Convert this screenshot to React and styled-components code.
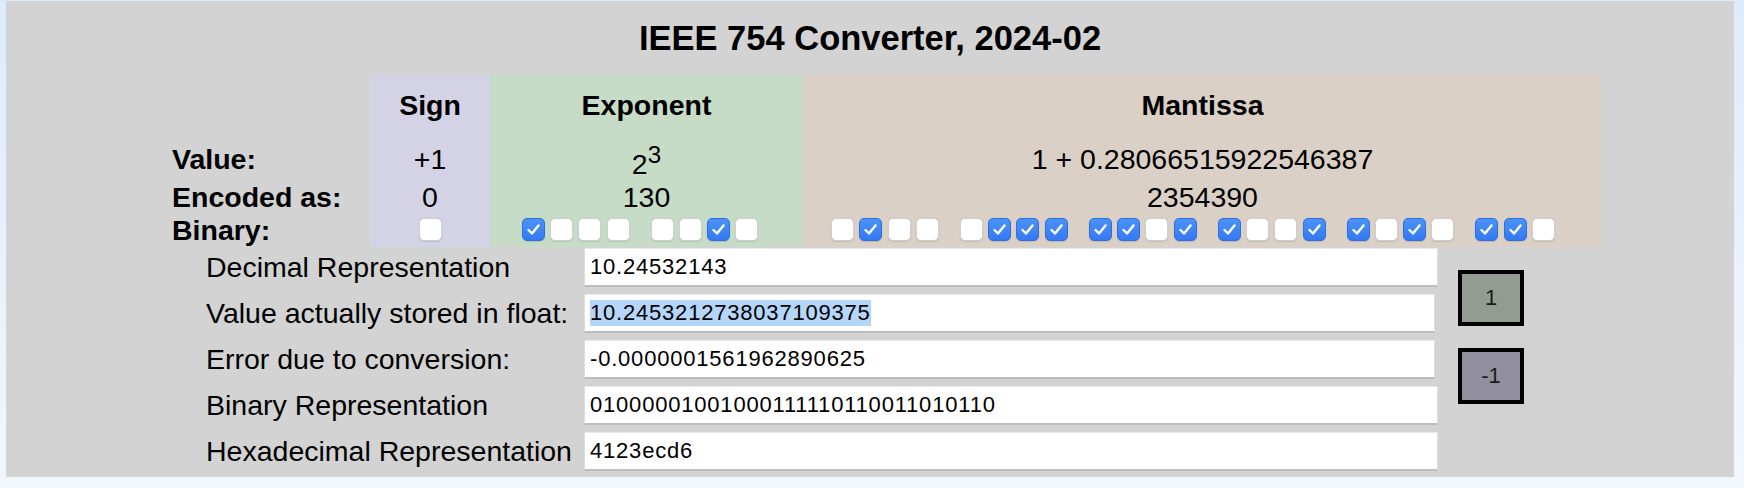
import React from 'react';
import styled, { createGlobalStyle } from 'styled-components';

const GlobalStyle = createGlobalStyle`
  html, body { margin: 0; padding: 0; }
  body {
    width: 1744px;
    height: 488px;
    overflow: hidden;
    background: linear-gradient(180deg, #deebfb 0%, #f1f7fd 100%);
    font-family: "Liberation Sans", Arial, Helvetica, sans-serif;
    color: #000;
  }
`;

const partColors = {
  sign: '#d3d3e5',
  exponent: '#c7dcc7',
  mantissa: '#dbd0c6',
};

const Panel = styled.div`
  margin: 1px 10px 0 6px;
  height: 476px;
  box-sizing: border-box;
  padding-top: 17px;
  background: #d3d3d3;
`;

const Title = styled.h1`
  margin: 0;
  font-size: 34.5px;
  line-height: 40px;
  font-weight: bold;
  text-align: center;
`;

const Table = styled.div`
  display: grid;
  grid-template-columns: 200px 120px 313px 799px;
  margin: 17px 0 0 164px;
  font-size: 28.5px;
  line-height: 33px;
`;

const Cell = styled.div`
  display: flex;
  align-items: center;
  justify-content: ${(p) => (p.$part ? 'center' : 'flex-start')};
  padding-left: ${(p) => (p.$part ? '0' : '2px')};
  background: ${(p) => (p.$part ? partColors[p.$part] : 'transparent')};
  font-weight: ${(p) => (p.$bold ? 'bold' : 'normal')};
  white-space: nowrap;
`;

const HeadCell = styled(Cell)`
  align-items: flex-start;
  padding-top: 14px;
  padding-bottom: 16px;
`;

const Sup = styled.sup`
  font-size: 0.85em;
`;

const Bits = styled.div`
  display: flex;
  justify-content: center;
  align-items: flex-start;
  gap: 21px;
  height: 100%;
  box-sizing: border-box;
  padding-top: 4px;
  padding-right: ${(p) => p.$shift || 0}px;
  background: ${(p) => partColors[p.$part]};
`;

const Group = styled.div`
  display: flex;
  gap: 5.3px;
`;

const Box = styled.span`
  display: inline-flex;
  align-items: center;
  justify-content: center;
  width: 23px;
  height: 23px;
  box-sizing: border-box;
  border-radius: 5px;
  background: ${(p) => (p.$on ? 'linear-gradient(180deg, #4b92f8 0%, #3479f3 100%)' : '#fff')};
  border: 1px solid ${(p) => (p.$on ? '#2f6fe0' : '#cfcfcf')};
  box-shadow: 0 0.5px 1px rgba(0, 0, 0, 0.12);
`;

const Bit = ({ on }) => (
  <Box $on={on}>
    {on && (
      <svg width="15" height="15" viewBox="0 0 15 15">
        <polyline
          points="2.5,8 6,11.5 12.5,3.5"
          fill="none"
          stroke="#fff"
          strokeWidth="2.4"
          strokeLinecap="round"
          strokeLinejoin="round"
        />
      </svg>
    )}
  </Box>
);

const BitRow = ({ bits, part, shift }) => {
  const groups = [];
  for (let i = 0; i < bits.length; i += 4) groups.push(bits.slice(i, i + 4));
  return (
    <Bits $part={part} $shift={shift}>
      {groups.map((g, gi) => (
        <Group key={gi}>
          {g.split('').map((b, bi) => (
            <Bit key={bi} on={b === '1'} />
          ))}
        </Group>
      ))}
    </Bits>
  );
};

const Lower = styled.div`
  display: flex;
  margin: 1px 0 0 200px;
`;

const Fields = styled.div`
  display: grid;
  grid-template-columns: 378px 854px;
  row-gap: 7px;
`;

const Label = styled.label`
  font-size: 28.5px;
  line-height: 39px;
  white-space: nowrap;
`;

const Field = styled.input`
  width: ${(p) => (p.$narrow ? '851px' : '854px')};
  height: 39px;
  box-sizing: border-box;
  margin: 0;
  padding: 0 5px;
  border: 1px solid #dedede;
  border-top-color: #e8e8e8;
  border-bottom: 2px solid #bdbdbd;
  border-radius: 0;
  background: #fff;
  font-family: "Liberation Sans", Arial, sans-serif;
  font-size: 22px;
  letter-spacing: 0.8px;
  color: #000;
  outline: none;
  display: flex;
  align-items: center;
`;

const Selection = styled.span`
  background: #b5d5fb;
  line-height: 26px;
`;

const Buttons = styled.div`
  display: flex;
  flex-direction: column;
  gap: 22px;
  padding-top: 22px;
  margin-left: 20px;
`;

const StepButton = styled.button`
  width: 66px;
  height: 56px;
  box-sizing: border-box;
  border: 4px solid #000;
  background: ${(p) => p.$bg};
  font-family: "Liberation Sans", Arial, Helvetica, sans-serif;
  font-size: 22px;
  color: #1b1b1b;
  padding: 0;
  cursor: pointer;
`;

const exponentBits = '10000010';
const mantissaBits = '01000111110110011010110';

export default function App() {
  return (
    <>
      <GlobalStyle />
      <Panel>
        <Title>IEEE 754 Converter, 2024-02</Title>
        <Table>
          <HeadCell />
          <HeadCell $part="sign" $bold>Sign</HeadCell>
          <HeadCell $part="exponent" $bold>Exponent</HeadCell>
          <HeadCell $part="mantissa" $bold>Mantissa</HeadCell>

          <Cell $bold>Value:</Cell>
          <Cell $part="sign">+1</Cell>
          <Cell $part="exponent">
            <span>
              2<Sup>3</Sup>
            </span>
          </Cell>
          <Cell $part="mantissa">1 + 0.28066515922546387</Cell>

          <Cell $bold>Encoded as:</Cell>
          <Cell $part="sign">0</Cell>
          <Cell $part="exponent">130</Cell>
          <Cell $part="mantissa">2354390</Cell>

          <Cell $bold>Binary:</Cell>
          <BitRow bits="0" part="sign" />
          <BitRow bits={exponentBits} part="exponent" shift={13} />
          <BitRow bits={mantissaBits} part="mantissa" shift={19} />
        </Table>

        <Lower>
          <Fields>
            <Label>Decimal Representation</Label>
            <Field defaultValue="10.24532143" />
            <Label>Value actually stored in float:</Label>
            <Field as="div" $narrow>
              <Selection>10.2453212738037109375</Selection>
            </Field>
            <Label>Error due to conversion:</Label>
            <Field $narrow readOnly defaultValue="-0.0000001561962890625" />
            <Label>Binary Representation</Label>
            <Field defaultValue="01000001001000111110110011010110" />
            <Label>Hexadecimal Representation</Label>
            <Field defaultValue="4123ecd6" />
          </Fields>
          <Buttons>
            <StepButton $bg="#939c91">1</StepButton>
            <StepButton $bg="#918f9e">-1</StepButton>
          </Buttons>
        </Lower>
      </Panel>
    </>
  );
}
